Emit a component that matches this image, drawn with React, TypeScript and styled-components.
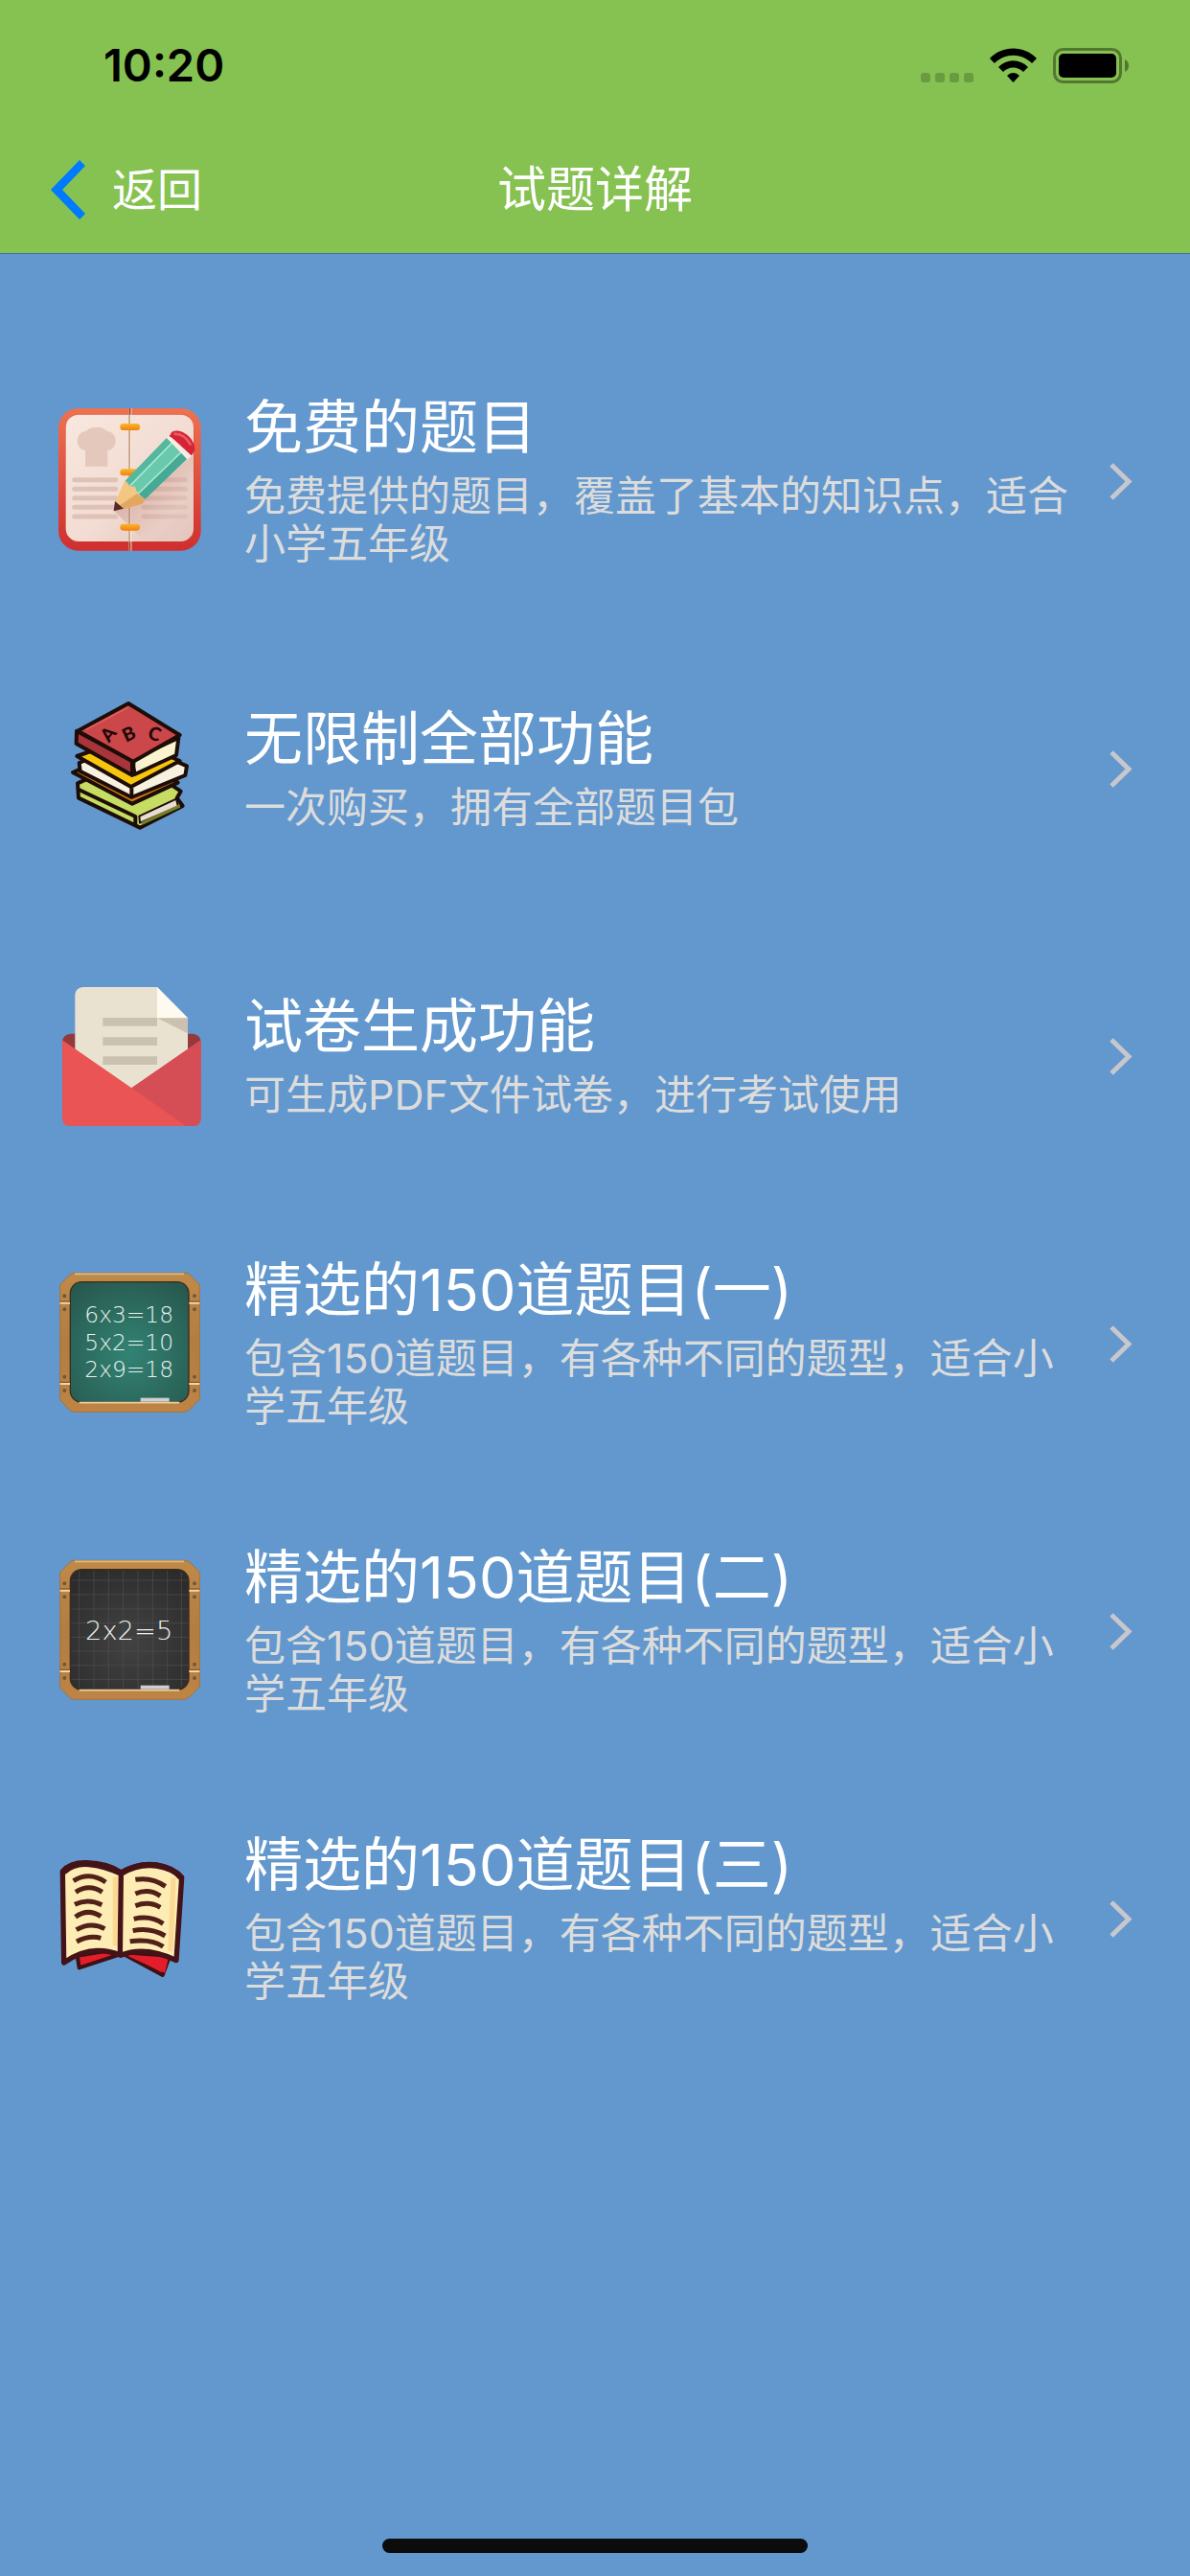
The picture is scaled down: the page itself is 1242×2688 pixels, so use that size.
import React from "react";
import styled, { createGlobalStyle } from "styled-components";

const GlobalStyle = createGlobalStyle`
  * { box-sizing: border-box; }
  body {
    margin: 0;
    background: #6298ce;
    font-family: Inter, "Noto Sans CJK SC", sans-serif;
  }
`;

const Screen = styled.div`
  display: flex;
  flex-direction: column;
  min-height: 100vh;
`;

const Header = styled.header`
  background: #86c251;
  border-bottom: 1px solid #44709c;
`;

const StatusBar = styled.div`
  display: flex;
  align-items: center;
  justify-content: space-between;
  height: 132px;
  padding: 4px 64px 0 108px;
`;

const Clock = styled.time`
  font-size: 47px;
  line-height: 60px;
  font-weight: 600;
  color: #000;
`;

const StatusIcons = styled.div`
  display: flex;
  align-items: flex-end;
  gap: 17px;
`;

const Glyph = styled.svg`
  display: block;
  flex: none;
  overflow: visible;
`;

const NavBar = styled.nav`
  display: grid;
  grid-template-columns: 1fr auto 1fr;
  align-items: center;
  height: 132px;
  padding: 0 53px;
`;

const BackButton = styled.button`
  display: flex;
  align-items: center;
  justify-self: start;
  gap: 28px;
  padding: 0;
  border: 0;
  background: none;
  color: #fff;
  font-family: inherit;
  font-size: 47px;
  line-height: 60px;
  font-weight: 400;
  cursor: pointer;
`;

const Title = styled.h1`
  margin: 0;
  color: #fff;
  font-size: 51px;
  line-height: 60px;
  font-weight: 400;
`;

const List = styled.ul`
  margin: 0;
  padding: 87px 0 0;
  list-style: none;
`;

const Row = styled.a`
  display: flex;
  align-items: center;
  min-height: 300px;
  padding: 0 60px;
  color: #fff;
  text-decoration: none;
`;

const RowText = styled.div`
  display: flex;
  flex: 1;
  flex-direction: column;
  gap: 16px;
  margin: 0 30px 0 45px;
  padding-top: 4px;
`;

const RowTitle = styled.h2`
  margin: 0;
  font-size: 61px;
  line-height: 60px;
  font-weight: 400;
`;

const RowDescription = styled.p`
  margin: 0;
  color: #dcdcdc;
  font-size: 43px;
  line-height: 50px;
  font-weight: 400;
`;

const HomeArea = styled.footer`
  display: flex;
  justify-content: center;
  margin-top: auto;
  padding: 24px;
`;

const HomeIndicator = styled.div`
  width: 444px;
  height: 15px;
  border-radius: 8px;
  background: #0c0c0c;
`;

const ChalkText = styled.text<{ $size: number }>`
  font-family: "DejaVu Sans", sans-serif;
  font-weight: 200;
  font-size: ${({ $size }) => $size}px;
  fill: #e9f2ee;
  text-anchor: middle;
`;

const CoverLetter = styled.text`
  font-family: Lato, sans-serif;
  font-weight: 900;
  font-size: 58px;
  fill: #1c0707;
  text-anchor: middle;
`;

function Picture({ children }: { children: React.ReactNode }) {
  return (
    <Glyph width="150" height="150" viewBox="30 51 450 450" aria-hidden="true">
      {children}
    </Glyph>
  );
}

function NotebookIcon() {
  return (
    <Picture>
      <defs>
        <linearGradient id="nbCover" x1="0" y1="0" x2="0" y2="1">
          <stop offset="0" stopColor="#ee7250" />
          <stop offset="1" stopColor="#cf2f2f" />
        </linearGradient>
        <linearGradient id="nbPage" x1="0" y1="0" x2="1" y2="1">
          <stop offset="0" stopColor="#f8e8df" />
          <stop offset="0.55" stopColor="#f2dcd3" />
          <stop offset="1" stopColor="#e3c4bb" />
        </linearGradient>
        <linearGradient id="nbRing" x1="0" y1="0" x2="0" y2="1">
          <stop offset="0" stopColor="#ffb52a" />
          <stop offset="1" stopColor="#ee8211" />
        </linearGradient>
        <linearGradient id="nbShade" x1="0" y1="0" x2="1" y2="1">
          <stop offset="0" stopColor="#8c3b38" stopOpacity="0.5" />
          <stop offset="0.7" stopColor="#a85a50" stopOpacity="0" />
        </linearGradient>
      </defs>
      <g transform="translate(-30 -30)">
        <rect x="63" y="78" width="446" height="446" rx="62" fill="url(#nbCover)" />
        <rect x="85" y="97" width="402" height="401" rx="42" fill="#c9372f" opacity="0.5" />
        <rect x="86" y="98" width="400" height="397" rx="40" fill="url(#nbPage)" />
        <path d="M287 78V524" stroke="#c8a68a" strokeWidth="9" />
        <path d="M290 78V524" stroke="#fbeee0" strokeWidth="4" />
        <path d="M287 78V98M287 496V524" stroke="#b9372a" strokeWidth="5" />
        <path
          d="M147 260V210C114 207 114 153 149 150C164 133 201 133 216 150C251 153 251 207 217 210V260Z"
          fill="#e3c8bb"
        />
        <path
          d="M113 302H242M113 331H242M113 359H242M113 388H242M113 417H242M330 302H460M330 331H460M330 359H460M330 388H460M330 417H460"
          stroke="#dfc2b7"
          strokeWidth="15"
          strokeLinecap="round"
        />
        <path d="M238 400L330 364L486 222V420Q486 495 446 495H333Z" fill="url(#nbShade)" />
        {[126, 268, 440].map((y) => (
          <rect key={y} x="256" y={y} width="62" height="21" rx="10" fill="url(#nbRing)" />
        ))}
        <path d="M272 305L402 171L466 236L334 363Z" fill="#6ac8ad" />
        <path d="M272 305L402 171L418 187L288 320Z" fill="#55b79d" />
        <path d="M313 345L447 216L466 236L334 363Z" fill="#47a993" />
        <path d="M288 320L418 187M313 345L447 216" stroke="#a6e8d4" strokeWidth="5" />
        <path d="M402 171L414 160L482 226L466 238Z" fill="#f7ece5" />
        <path d="M410 166L418 152C448 137 492 174 490 208L480 226Q456 188 410 166Z" fill="#d42535" />
        <path d="M412 164L479 226L486 216L440 160Z" fill="#d42535" />
        <path d="M424 158Q459 157 478 194" stroke="#ef5963" strokeWidth="8" fill="none" />
        <path d="M236 399L241 370L272 303L286 323L303 323L310 345L334 364L325 378L266 393Z" fill="#f3c682" />
        <path d="M255 382L310 345L334 364L325 378L266 393Z" fill="#e2a761" />
        <path d="M236 400L240 369L267 392Z" fill="#512a29" />
      </g>
    </Picture>
  );
}

function BooksIcon() {
  return (
    <Picture>
      <g stroke="#1c0d08" strokeWidth="12" strokeLinejoin="round">
        <path d="M93 322L262 245L416 347L404 368L422 393L288 461L96 368Z" fill="#c6dc62" />
        <path d="M286 425L402 371L408 395L288 446Z" fill="#e9dcd0" strokeWidth="6" />
        <path d="M294 448L413 393" stroke="#74802a" strokeWidth="10" />
        <path d="M97 342L274 426V454" fill="none" />
        <path d="M78 288L262 205L407 320L264 386Z" fill="#d47a18" />
        <path d="M98 258L262 190L435 268L430 297L262 366L101 284Z" fill="#f7f1df" />
        <path d="M262 337V364" />
        <path d="M91 237L252 180L413 252L260 333Z" fill="#f8c50d" />
        <path d="M262 248L409 180L402 234L272 294Z" fill="#fbf3cf" />
        <path d="M90 158L264 252V297L89 198Z" fill="#a9343c" />
        <path d="M252 72L413 171L267 254L93 158Z" fill="#cc4749" />
        <path d="M267 253V295" strokeWidth="14" />
      </g>
      <path d="M118 155L252 84" stroke="#e16663" strokeWidth="4" />
      <CoverLetter transform="translate(204 181) rotate(-50)">A</CoverLetter>
      <CoverLetter transform="translate(262 186) rotate(-25)">B</CoverLetter>
      <CoverLetter transform="translate(328 187) rotate(18)">C</CoverLetter>
    </Picture>
  );
}

function EnvelopeIcon() {
  return (
    <Picture>
      <rect x="45" y="206" width="434" height="150" rx="26" fill="#943a3d" />
      <path d="M85 84Q87 62 110 60H342L438 157V300L262 400L85 290Z" fill="#eae2d0" />
      <path d="M342 60L438 157H342Z" fill="#fffaf0" />
      <path d="M342 157H438V205Z" fill="#cac1b1" />
      <path d="M172 169H342M172 230H342M172 290H342" stroke="#cac1b1" strokeWidth="26" />
      <path d="M45 226L262 376L479 226V470Q479 495 454 495H70Q45 495 45 470Z" fill="#ea5455" />
      <path d="M262 376L479 226V470Q479 495 454 495H432Z" fill="#d54e56" />
    </Picture>
  );
}

function Chalkboard({
  id,
  inner,
  outer,
  lines,
  size,
  grid,
}: {
  id: string;
  inner: string;
  outer: string;
  lines: { text: string; y: number }[];
  size: number;
  grid?: boolean;
}) {
  return (
    <Picture>
      <defs>
        <radialGradient id={`${id}Board`} cx="0.5" cy="0.6" r="0.7">
          <stop offset="0" stopColor={inner} />
          <stop offset="1" stopColor={outer} />
        </radialGradient>
        <linearGradient id={`${id}Wood`} x1="0" y1="0" x2="0" y2="1">
          <stop offset="0" stopColor="#bf8a49" />
          <stop offset="0.5" stopColor="#b17d42" />
          <stop offset="1" stopColor="#bd8445" />
        </linearGradient>
      </defs>
      <path
        d="M82 55H428Q440 55 448 64L475 92V450L446 480Q436 490 425 490H86Q74 490 66 482L38 452V92L66 64Q74 55 82 55Z"
        fill={`url(#${id}Wood)`}
        stroke="#a5733a"
        strokeWidth="3"
        strokeLinejoin="round"
      />
      <path d="M84 58H426" stroke="#e3bb7d" strokeWidth="5" />
      <rect x="70" y="83" width="371" height="377" rx="36" fill={`url(#${id}Board)`} stroke="#3b2c1c" strokeWidth="4" />
      {grid && (
        <path
          d="M98 88V454M144 86V457M190 86V457M236 86V457M282 86V457M328 86V457M374 86V457M418 92V450M74 117H438M72 162H440M72 207H440M72 251H440M72 295H440M72 339H440M72 383H440M74 427H438"
          stroke="#505050"
          strokeWidth="2"
        />
      )}
      <path d="M38 149H69M442 149H475M38 402H69M442 402H475" stroke="#f3d6a8" strokeWidth="6" />
      <path d="M38 144H69M442 144H475M38 397H69M442 397H475" stroke="#79501f" strokeWidth="3" />
      {[127, 169, 380, 423].map((y) => (
        <g key={y} fill="#71583a">
          <circle cx="52" cy={y} r="6" />
          <circle cx="459" cy={y} r="6" />
        </g>
      ))}
      <path d="M98 461H412" stroke="#edcf9c" strokeWidth="5" />
      <path d="M290 452H380" stroke="#cfcfcf" strokeWidth="12" />
      {lines.map((line) => (
        <ChalkText key={line.text} x="254" y={line.y} $size={size}>
          {line.text}
        </ChalkText>
      ))}
    </Picture>
  );
}

function OpenBookIcon() {
  return (
    <Picture>
      <path d="M92 392L202 374L226 388L98 430Z" fill="#e31e2a" stroke="#3d1013" strokeWidth="12" strokeLinejoin="round" />
      <path d="M238 388L380 396L359 453Z" fill="#e31e2a" stroke="#3d1013" strokeWidth="12" strokeLinejoin="round" />
      <path d="M238 388L378 398L366 446L330 430Z" fill="#e31e2a" />
      <path
        d="M46 128Q70 100 120 101Q190 103 229 132Q285 100 340 108Q391 117 419 147L402 407Q305 360 228 391Q135 353 50 414Z"
        fill="#fdecb4"
        stroke="#431318"
        strokeWidth="16"
        strokeLinejoin="round"
      />
      <path d="M211 145V361M393 148L384 378" stroke="#fbd995" strokeWidth="16" />
      <path d="M229 132L226 390" stroke="#431318" strokeWidth="16" />
      <path d="M49 130Q80 101 128 105T229 134Q285 102 340 110T418 149" stroke="#431318" strokeWidth="19" fill="none" />
      <path
        d="M80 158Q130 127 181 162M87 193Q129 166 170 193M84 232Q125 212 169 233M86 271Q125 242 166 269M89 311Q135 284 178 308M90 348Q130 327 166 337M274 154Q325 145 368 175M274 198Q316 180 352 205M274 236Q317 220 352 241M269 277Q322 265 361 292M266 314Q321 303 367 330M257 347Q325 338 361 364"
        stroke="#512018"
        strokeWidth="15"
        fill="none"
      />
    </Picture>
  );
}

const items = [
  {
    title: "免费的题目",
    description: "免费提供的题目，覆盖了基本的知识点，适合小学五年级",
    icon: <NotebookIcon />,
  },
  { title: "无限制全部功能", description: "一次购买，拥有全部题目包", icon: <BooksIcon /> },
  { title: "试卷生成功能", description: "可生成PDF文件试卷，进行考试使用", icon: <EnvelopeIcon /> },
  {
    title: "精选的150道题目(一)",
    description: "包含150道题目，有各种不同的题型，适合小学五年级",
    icon: (
      <Chalkboard
        id="green"
        inner="#328374"
        outer="#28594f"
        size={70}
        lines={[
          { text: "6x3=18", y: 211 },
          { text: "5x2=10", y: 296 },
          { text: "2x9=18", y: 381 },
        ]}
      />
    ),
  },
  {
    title: "精选的150道题目(二)",
    description: "包含150道题目，有各种不同的题型，适合小学五年级",
    icon: (
      <Chalkboard id="black" inner="#424242" outer="#2b2b2b" size={82} grid lines={[{ text: "2x2=5", y: 303 }]} />
    ),
  },
  {
    title: "精选的150道题目(三)",
    description: "包含150道题目，有各种不同的题型，适合小学五年级",
    icon: <OpenBookIcon />,
  },
];

export default function App() {
  return (
    <Screen lang="zh-CN">
      <GlobalStyle />
      <Header>
        <StatusBar>
          <Clock>10:20</Clock>
          <StatusIcons>
            <Glyph width="55" height="11" viewBox="0 0 55 11" fill="#6a9b40" aria-hidden="true">
              {[0, 15, 30, 45].map((x) => (
                <rect key={x} x={x} y="0" width="10" height="10" rx="3" />
              ))}
            </Glyph>
            <Glyph width="49" height="37" viewBox="0 0 49 37" aria-hidden="true">
              <path d="M0 11C13 -3 36 -3 49 11L44 16C33 5 16 5 5 16Z" />
              <path d="M9 20C18 11 31 11 40 20L35 25C29 19 20 19 14 25Z" />
              <path d="M18 29C22 25 27 25 31 29L24.500 36Z" />
            </Glyph>
            <Glyph width="79" height="37" viewBox="0 0 79 37" aria-hidden="true">
              <rect x="1.500" y="1.500" width="69" height="34" rx="9" fill="none" stroke="#52772f" strokeWidth="3" />
              <rect x="6" y="6" width="60" height="25" rx="5" />
              <path d="M75 12Q79 14 79 18.500T75 25Z" fill="#52772f" />
            </Glyph>
          </StatusIcons>
        </StatusBar>
        <NavBar>
          <BackButton type="button">
            <Glyph width="36" height="62" viewBox="0 0 36 62" aria-hidden="true">
              <path d="M30 0L36 6L12 31L36 56L30 62L0 31Z" fill="#007aff" />
            </Glyph>
            返回
          </BackButton>
          <Title>试题详解</Title>
        </NavBar>
      </Header>
      <main>
        <List>
          {items.map((item) => (
            <li key={item.title}>
              <Row href="#">
                {item.icon}
                <RowText>
                  <RowTitle>{item.title}</RowTitle>
                  <RowDescription>{item.description}</RowDescription>
                </RowText>
                <Glyph width="24" height="39" viewBox="0 0 24 39" aria-hidden="true">
                  <path d="M2 2L20 19.500L2 37" fill="none" stroke="#c7c7cc" strokeWidth="5" />
                </Glyph>
              </Row>
            </li>
          ))}
        </List>
      </main>
      <HomeArea>
        <HomeIndicator />
      </HomeArea>
    </Screen>
  );
}
